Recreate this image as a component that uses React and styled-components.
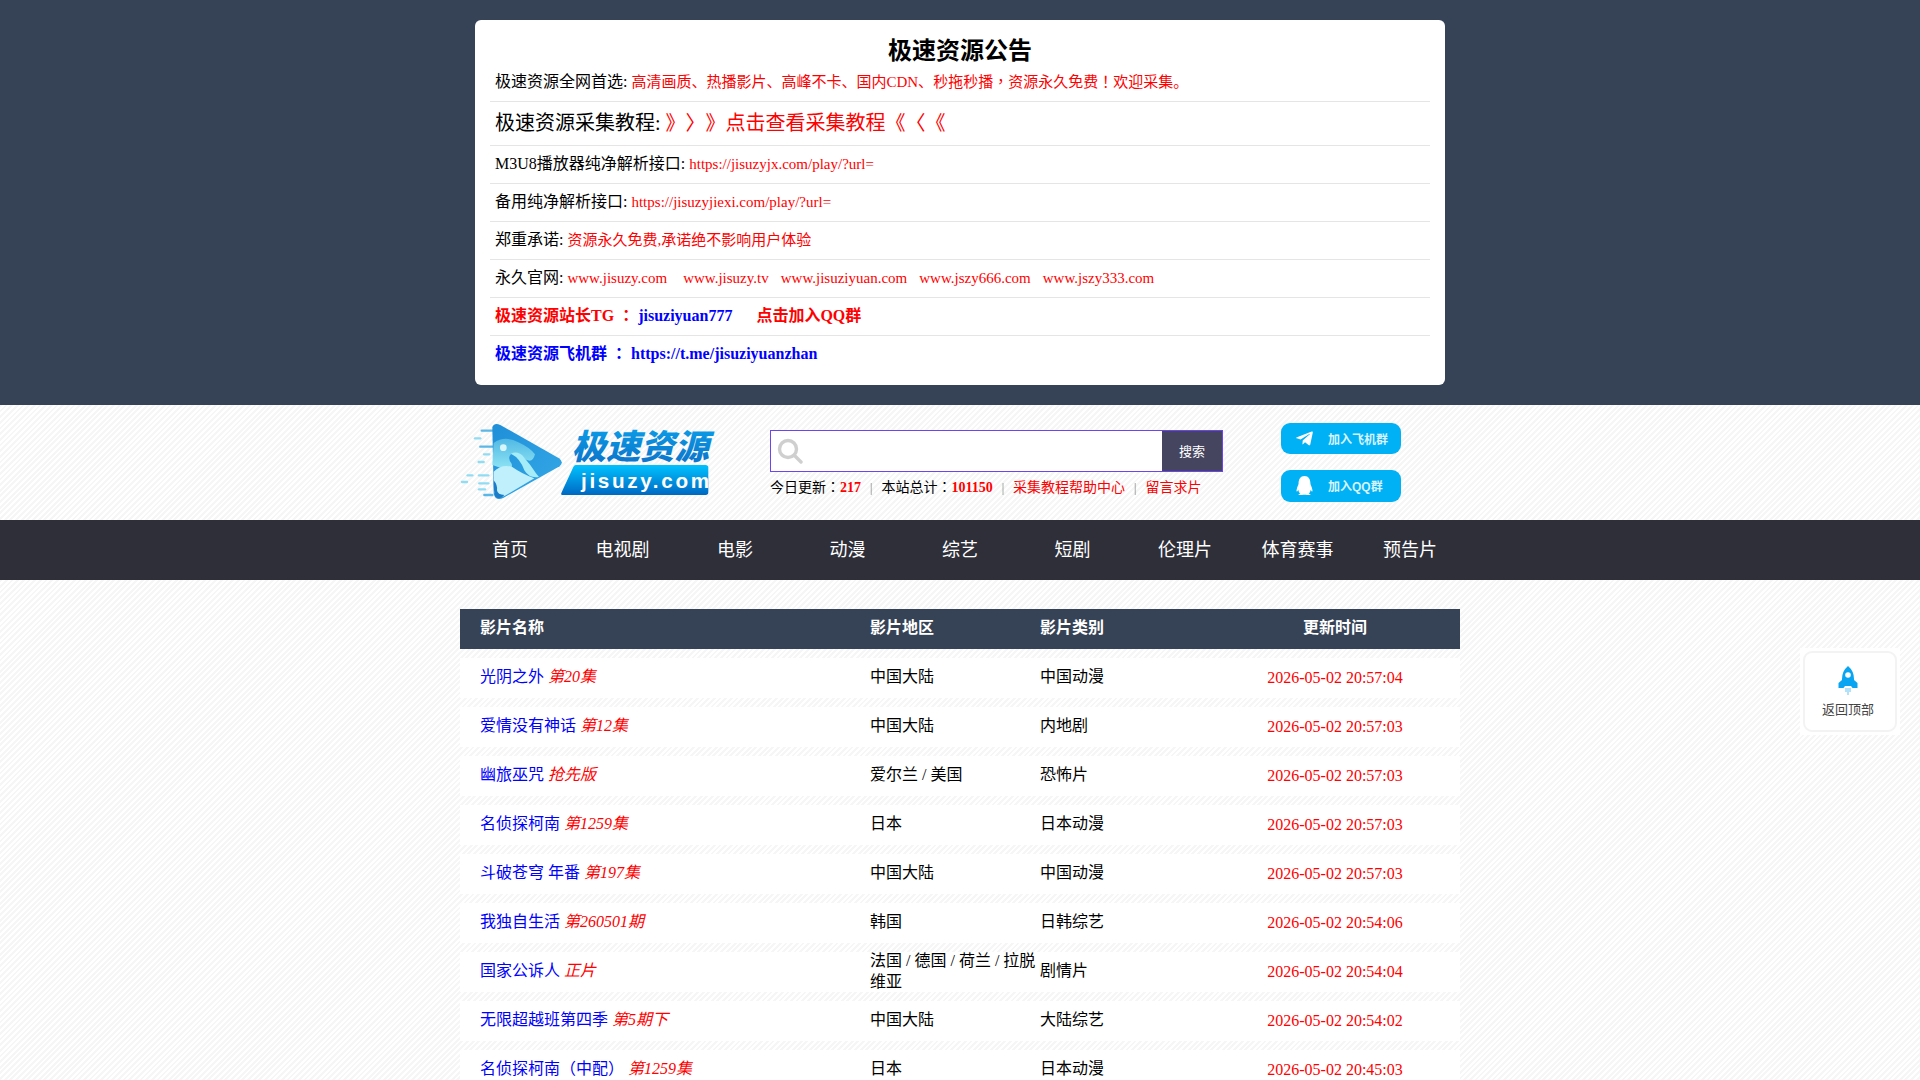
import React from 'react'
import styled, { createGlobalStyle } from 'styled-components'
import { FaTelegramPlane, FaQq } from 'react-icons/fa'

const serif = `"Liberation Serif", "Noto Sans CJK SC", serif`
const sans = `"Liberation Sans", "Noto Sans CJK SC", sans-serif`

const GlobalStyle = createGlobalStyle`
  html, body {
    margin: 0;
    padding: 0;
  }
  body {
    font-family: ${serif};
    font-size: 16px;
    color: #000;
    text-spacing-trim: space-all;
    background-color: #fff;
    background-image: repeating-linear-gradient(135deg, #fff 0, #fff 2px, #f6f6f6 2px, #f6f6f6 4px);
  }
  * {
    box-sizing: border-box;
  }
`

const Notice = styled.section`
  background: #364356;
  padding: 20px 0;
`

const NoticeCard = styled.div`
  width: 970px;
  height: 365px;
  margin: 0 auto;
  padding: 18px 15px 0;
  background: #fff;
  border-radius: 6px;
`

const NoticeTitle = styled.h3`
  margin: 0;
  font-size: 24px;
  line-height: 26px;
  font-weight: bold;
  text-align: center;
`

const NoticeList = styled.ul`
  margin: 0;
  padding: 0;
  list-style: none;
`

const NoticeItem = styled.li`
  height: ${p => p.$height || 38}px;
  line-height: ${p => (p.$height ? p.$height - 1 : 35)}px;
  padding-left: 5px;
  font-size: ${p => p.$size || 16}px;
  font-weight: ${p => (p.$bold ? 'bold' : 'normal')};
  border-bottom: ${p => (p.$last ? 'none' : '1px solid #e5e5e5')};
  white-space: nowrap;
`

const Paint = styled.span`
  color: ${p => p.$color || '#f00'};
  font-size: ${p => (p.$size ? `${p.$size}px` : 'inherit')};
  margin-left: ${p => p.$gap || 0}px;
`

// centred full-width punctuation, as in the reference
const Punct = styled.span`
  font-family: "Liberation Serif", "Noto Sans CJK TC", serif;
`

const Masthead = styled.header`
  width: 1000px;
  height: 115px;
  margin: 0 auto;
  display: flex;
  position: relative;
`

const LogoBox = styled.a`
  flex: none;
  width: 310px;
  padding-top: 10px;
  margin-left: -5px;
  margin-right: 5px;
`

const SearchArea = styled.div`
  flex: none;
  width: 453px;
  padding-top: 25px;
`

const SearchForm = styled.div`
  display: flex;
  height: 42px;
  background: #fff;
  border: 1px solid #6a45f0;
`

const SearchIconBox = styled.div`
  flex: 1;
  padding: 7px 0 0 6px;
`

const SearchButton = styled.button`
  width: 60px;
  border: none;
  padding: 0 0 2px;
  background: #45455f;
  color: #fff;
  font-family: ${serif};
  font-size: 13px;
`

const Stats = styled.div`
  display: flex;
  align-items: center;
  margin-top: 6px;
  font-size: 14px;
  line-height: 20px;
`

const Sep = styled.i`
  font-style: normal;
  color: #777;
  font-size: 12px;
  margin: 0 9px;
`

const Strong = styled.b`
  color: #f00;
`

const Side = styled.div`
  margin-left: 58px;
  padding-top: 18px;
  display: flex;
  flex-direction: column;
  gap: 16px;
`

const SideButton = styled.a`
  display: flex;
  align-items: center;
  width: 120px;
  height: ${p => p.$height}px;
  padding: 0 0 1px 14px;
  background: #00b1f5;
  border-radius: 9px;
  color: #d8f3fe;
  font-family: ${sans};
  font-size: 12px;
  font-weight: bold;
`

const SideIcon = styled.span`
  width: 33px;
  display: flex;
  color: #fff;
  font-size: 19px;
`

const Nav = styled.nav`
  height: 60px;
  background: #2e2f39;
  display: flex;
  justify-content: center;
`

const NavLink = styled.a`
  width: 112.5px;
  text-align: center;
  color: #fff;
  font-size: 18px;
  line-height: 60px;
`

const Table = styled.div`
  width: 1000px;
  margin: 29px auto 0;
`

const columns = `
  display: grid;
  grid-template-columns: 410px 170px 170px 250px;
  grid-template-rows: 40px;
  align-items: center;
`

const HeadRow = styled.div`
  ${columns}
  background: #364356;
  color: #fff;
  font-weight: bold;
  margin-bottom: 9px;
`

const Row = styled.div`
  ${columns}
  background: #fff;
  margin-bottom: 9px;
`

const NameCell = styled.div`
  padding: 0 0 3px 20px;
  line-height: 21px;
`

const Cell = styled.div`
  padding-bottom: 3px;
  line-height: 21px;
`

const TimeCell = styled.div`
  text-align: center;
  color: ${p => (p.$head ? '#fff' : '#f00')};
  padding-bottom: ${p => (p.$head ? 3 : 2)}px;
  line-height: 21px;
`

const Title = styled.a`
  color: #00f;
`

const Episode = styled.em`
  color: #f00;
  margin-left: 4px;
`

const BackTop = styled.a`
  position: fixed;
  left: 1800px;
  top: 648px;
  width: 100px;
  height: 87px;
  padding: 3px;
  background: #fff;
`

const BackInner = styled.div`
  height: 100%;
  border: 2px solid #f3f3f3;
  border-radius: 9px;
  display: flex;
  flex-direction: column;
  align-items: center;
  padding-top: 13px;
  padding-right: 4px;
  font-family: ${sans};
  font-size: 13px;
  line-height: 16px;
  color: #444;
  gap: 7px;
`

const rows = [
  ['光阴之外', '第20集', '中国大陆', '中国动漫', '2026-05-02 20:57:04'],
  ['爱情没有神话', '第12集', '中国大陆', '内地剧', '2026-05-02 20:57:03'],
  ['幽旅巫咒', '抢先版', '爱尔兰 / 美国', '恐怖片', '2026-05-02 20:57:03'],
  ['名侦探柯南', '第1259集', '日本', '日本动漫', '2026-05-02 20:57:03'],
  ['斗破苍穹 年番', '第197集', '中国大陆', '中国动漫', '2026-05-02 20:57:03'],
  ['我独自生活', '第260501期', '韩国', '日韩综艺', '2026-05-02 20:54:06'],
  ['国家公诉人', '正片', '法国 / 德国 / 荷兰 / 拉脱维亚', '剧情片', '2026-05-02 20:54:04'],
  ['无限超越班第四季', '第5期下', '中国大陆', '大陆综艺', '2026-05-02 20:54:02'],
  ['名侦探柯南（中配）', '第1259集', '日本', '日本动漫', '2026-05-02 20:45:03'],
]

const navItems = ['首页', '电视剧', '电影', '动漫', '综艺', '短剧', '伦理片', '体育赛事', '预告片']

const Logo = () => (
  <svg width="260" height="95" viewBox="0 0 260 95">
    <defs>
      <linearGradient id="lgBody" x1="0" y1="0" x2="1" y2="1">
        <stop offset="0" stopColor="#1f8fd8" />
        <stop offset="1" stopColor="#35a9e8" />
      </linearGradient>
      <linearGradient id="lgMid" x1="0" y1="0" x2="0" y2="1">
        <stop offset="0" stopColor="#52b9e4" />
        <stop offset="1" stopColor="#8fe4f4" />
      </linearGradient>
      <linearGradient id="lgBar" x1="0" y1="0" x2="0" y2="1">
        <stop offset="0" stopColor="#00c2ff" />
        <stop offset="1" stopColor="#0068c2" />
      </linearGradient>
      <linearGradient id="lgText" x1="0" y1="0" x2="0" y2="1">
        <stop offset="0" stopColor="#0aa6ee" />
        <stop offset="1" stopColor="#0c6fc6" />
      </linearGradient>
    </defs>
    <g transform="scale(0.3333)">
      <g stroke="#8fdcf3" strokeLinecap="round" strokeWidth="7">
        <path d="M80 47H115" stroke="#5bb7e6" />
        <path d="M60 70H76" />
        <path d="M76 95H112" stroke="#5bb7e6" />
        <path d="M87 118H103" />
        <path d="M71 141H86" />
        <path d="M38 181H52" />
        <path d="M21 201H36" />
        <path d="M72 181H100" />
        <path d="M73 205H100" />
        <path d="M72 223H90" />
        <path d="M88 240H112" stroke="#5bb7e6" />
      </g>
      <path d="M112 36Q118 22 136 30L312 130Q328 142 314 154L146 248Q122 260 116 236Z" fill="url(#lgBody)" />
      <path d="M116 84Q150 60 190 82Q225 98 240 118Q232 150 205 128Q186 112 168 118Q156 128 170 146Q176 170 140 160L112 150Z" fill="url(#lgMid)" />
      <path d="M168 116Q190 106 208 128Q226 148 244 176L252 186Q224 192 208 166Q196 130 168 116Z" fill="#a5ecf8" />
      <path d="M116 170Q140 146 172 156Q200 176 238 190L150 242Q126 254 118 232Z" fill="#bff0fb" />
      <path d="M116 196Q128 210 126 226Q128 240 148 240Q136 256 122 246Q116 238 116 196Z" fill="#1c7cc8" />
      <circle cx="145" cy="98" r="10" fill="#d7f6fc" />
      <text x="350" y="131" fontFamily='"Noto Sans CJK SC", sans-serif' fontWeight="900" fontStyle="italic" fontSize="103" fill="url(#lgText)">极速资源</text>
      <path d="M362 150H752Q760 150 760 158V232Q760 240 752 240H322Q316 240 320 232L355 156Q358 150 362 150Z" fill="url(#lgBar)" />
      <text x="378" y="219" fontFamily='"Liberation Sans", sans-serif' fontWeight="bold" fontSize="62" letterSpacing="8" fill="#fff">jisuzy.com</text>
    </g>
  </svg>
)

const SearchGlyph = () => (
  <svg width="26" height="26" viewBox="0 0 26 26" fill="none" stroke="#cfcfcf">
    <circle cx="11" cy="11" r="8.5" strokeWidth="3.4" />
    <path d="M17.5 17.5L24 24" strokeWidth="3.4" strokeLinecap="round" />
  </svg>
)

const Rocket = () => (
  <svg width="20" height="29" viewBox="0 0 20 29">
    <path d="M10 0Q16 5 16 13V14L19.5 17V22H14.5L13 20H7L5.5 22H0.5V17L4 14V13Q4 5 10 0Z" fill="#0aa5f2" />
    <circle cx="10" cy="9" r="2.8" fill="#fff" />
    <path d="M8 22V26M10 22V29M12 22V26" stroke="#7fcff5" strokeWidth="1.2" fill="none" />
  </svg>
)

const App = () => {
  return (
    <>
      <GlobalStyle />
      <Notice>
        <NoticeCard>
          <NoticeTitle>极速资源公告</NoticeTitle>
          <NoticeList>
            <NoticeItem>
              极速资源全网首选: <Paint $size={15}>高清画质、热播影片、高峰不卡、国内CDN、秒拖秒播<Punct>，</Punct>资源永久免费<Punct>！</Punct>欢迎采集。</Paint>
            </NoticeItem>
            <NoticeItem $height={44} $size={20}>
              极速资源采集教程: <Paint><Punct>》〉》</Punct>点击查看采集教程<Punct>《〈《</Punct></Paint>
            </NoticeItem>
            <NoticeItem>
              M3U8播放器纯净解析接口: <Paint $size={15}>https://jisuzyjx.com/play/?url=</Paint>
            </NoticeItem>
            <NoticeItem>
              备用纯净解析接口: <Paint $size={15}>https://jisuzyjiexi.com/play/?url=</Paint>
            </NoticeItem>
            <NoticeItem>
              郑重承诺: <Paint $size={15}>资源永久免费,承诺绝不影响用户体验</Paint>
            </NoticeItem>
            <NoticeItem>
              永久官网: <Paint $size={15}>www.jisuzy.com</Paint>
              <Paint $size={15} $gap={16}>www.jisuzy.tv</Paint>
              <Paint $size={15} $gap={12}>www.jisuziyuan.com</Paint>
              <Paint $size={15} $gap={12}>www.jszy666.com</Paint>
              <Paint $size={15} $gap={12}>www.jszy333.com</Paint>
            </NoticeItem>
            <NoticeItem $bold>
              <Paint>极速资源站长TG <Punct>：</Punct> </Paint><Paint $color="#00f">jisuziyuan777</Paint>
              <Paint $gap={24}>点击加入QQ群</Paint>
            </NoticeItem>
            <NoticeItem $bold $last>
              <Paint $color="#00f">极速资源飞机群 <Punct>：</Punct> https://t.me/jisuziyuanzhan</Paint>
            </NoticeItem>
          </NoticeList>
        </NoticeCard>
      </Notice>

      <Masthead>
        <LogoBox><Logo /></LogoBox>
        <SearchArea>
          <SearchForm>
            <SearchIconBox><SearchGlyph /></SearchIconBox>
            <SearchButton>搜索</SearchButton>
          </SearchForm>
          <Stats>
            今日更新<Punct>：</Punct><Strong>217</Strong><Sep>|</Sep>
            本站总计<Punct>：</Punct><Strong>101150</Strong><Sep>|</Sep>
            <Paint>采集教程帮助中心</Paint><Sep>|</Sep>
            <Paint>留言求片</Paint>
          </Stats>
        </SearchArea>
        <Side>
          <SideButton $height={31}>
            <SideIcon><FaTelegramPlane /></SideIcon>加入飞机群
          </SideButton>
          <SideButton $height={32}>
            <SideIcon><FaQq /></SideIcon>加入QQ群
          </SideButton>
        </Side>
      </Masthead>

      <Nav>
        {navItems.map(item => <NavLink key={item}>{item}</NavLink>)}
      </Nav>

      <Table>
        <HeadRow>
          <NameCell>影片名称</NameCell>
          <Cell>影片地区</Cell>
          <Cell>影片类别</Cell>
          <TimeCell $head>更新时间</TimeCell>
        </HeadRow>
        {rows.map(([name, ep, region, type, time]) => (
          <Row key={name}>
            <NameCell><Title>{name}</Title><Episode>{ep}</Episode></NameCell>
            <Cell>{region}</Cell>
            <Cell>{type}</Cell>
            <TimeCell>{time}</TimeCell>
          </Row>
        ))}
      </Table>

      <BackTop>
        <BackInner>
          <Rocket />
          返回顶部
        </BackInner>
      </BackTop>
    </>
  )
}

export default App
